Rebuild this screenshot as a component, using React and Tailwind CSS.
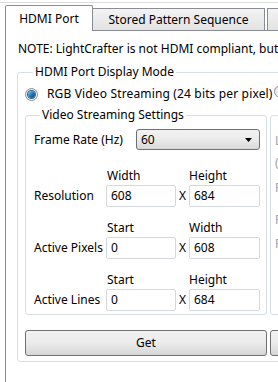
import React from 'react';

const font = { fontFamily: '"Noto Sans", "Open Sans", sans-serif' };

const Radio = ({ checked }) => (
  <span className="relative inline-flex h-[13px] w-[13px] shrink-0 items-center justify-center rounded-full border border-[#8e8f8f] bg-gradient-to-br from-[#e6e6e6] to-[#ffffff]">
    {checked && (
      <span className="h-[7px] w-[7px] rounded-full bg-gradient-to-br from-[#7ad0f5] via-[#1d7ac0] to-[#0f3c6e] shadow-[0_0_0_1px_#2a5f8f]" />
    )}
  </span>
);

const Field = ({ value, w }) => (
  <div className={`${w} h-[22px] flex items-center border border-[#d5d9de] rounded-[2px] bg-white pl-[4px] text-[12px] text-black`}>
    {value}
  </div>
);

const Row = ({ label, h1, h2, v1, v2 }) => (
  <div className="mt-[12px] first:mt-0">
    <div className="flex h-[18px] items-center text-[12px] leading-none">
      <span className="w-[72px]" />
      <span className="w-[83px] pl-[1px]">{h1}</span>
      <span>{h2}</span>
    </div>
    <div className="flex h-[22px] items-center text-[12px]">
      <span className="w-[72px] whitespace-nowrap">{label}</span>
      <Field value={v1} w="w-[70px]" />
      <span className="w-[13px] text-center">X</span>
      <Field value={v2} w="w-[71px]" />
    </div>
  </div>
);

export default function App() {
  return (
    <div className="w-[278px] h-[382px] overflow-hidden bg-white text-black relative" style={font}>
      <div className="h-[3px] border-b border-[#dcdcdc] w-[420px]" />

      {/* tabs */}
      <div className="flex w-[500px] items-end pl-[5px] mt-[2px] whitespace-nowrap">
        <div className="relative z-10 -mb-px flex h-[26px] w-[88px] shrink-0 items-center justify-center border border-b-0 border-[#898c95] rounded-t-[2px] bg-white text-[12px]">
          HDMI Port
        </div>
        <div className="flex h-[22px] w-[172px] shrink-0 items-center justify-center border border-l-0 border-b-0 border-[#898c95] bg-gradient-to-b from-[#f3f3f3] to-[#e3e3e3] text-[12px]">
          Stored Pattern Sequence
        </div>
        <div className="ml-[2px] h-[22px] w-[80px] shrink-0 border border-b-0 border-[#898c95] bg-gradient-to-b from-[#f3f3f3] to-[#e3e3e3]" />
      </div>

      {/* pane */}
      <div className="ml-[5px] h-[360px] w-[500px] border-l border-t border-[#898c95] bg-white pl-[11px] pt-[10px]">
        <div className="h-[16px] leading-[16px] whitespace-nowrap text-[12px] pl-[1px]">
          NOTE: LightCrafter is not HDMI compliant, but supports
        </div>

        <fieldset className="mt-[7px] w-[440px] h-[298px] border border-[#d5dfe5] rounded-[3px] pl-[7px]">
          <legend className="ml-[8px] px-[2px] text-[12px] leading-[16px]">HDMI Port Display Mode</legend>

          <div className="mt-[6px] flex h-[16px] items-center text-[12px] whitespace-nowrap">
            <Radio checked />
            <span className="ml-[9px] tracking-[0.15px]">RGB Video Streaming (24 bits per pixel)</span>
            <span className="ml-[1px]"><Radio /></span>
          </div>

          <div className="mt-[5px] flex gap-[3px]">
            <fieldset className="w-[242px] h-[208px] shrink-0 border border-[#d5dfe5] rounded-[3px] pl-[8px]">
              <legend className="ml-[6px] px-[2px] text-[12px] leading-[16px]">Video Streaming Settings</legend>

              <div className="mt-[6px] flex h-[21px] items-center text-[12px]">
                <span className="w-[102px]">Frame Rate (Hz)</span>
                <div className="relative flex h-[21px] w-[124px] items-center rounded-[3px] border border-[#707070] bg-gradient-to-b from-[#f2f2f2] via-[#ebebeb] to-[#d8d8d8] pl-[4px]">
                  60
                  <svg className="absolute right-[7px] top-[8px]" width="7" height="4" viewBox="0 0 7 4">
                    <path d="M0 0H7L3.5 4Z" fill="#000" />
                  </svg>
                </div>
              </div>

              <div className="mt-[17px]">
                <Row label="Resolution" h1="Width" h2="Height" v1="608" v2="684" />
                <Row label="Active Pixels" h1="Start" h2="Width" v1="0" v2="608" />
                <Row label="Active Lines" h1="Start" h2="Height" v1="0" v2="684" />
              </div>
            </fieldset>

            <fieldset className="w-[160px] h-[208px] shrink-0 border border-[#d5dfe5] rounded-[3px] pl-[4px] text-[12px] text-[#a0a0a0]">
              <legend className="ml-[80px] px-[2px] leading-[16px]">&nbsp;</legend>
              <div className="mt-[10px] leading-[16px]">Line</div>
              <div className="mt-[6px] leading-[16px]">(</div>
              <div className="mt-[9px] leading-[16px]">F</div>
              <div className="mt-[16px] leading-[16px]">F</div>
              <div className="mt-[8px] leading-[16px]">F</div>
            </fieldset>
          </div>

          <div className="mt-[15px] flex gap-[3px]">
            <button className="h-[26px] w-[242px] shrink-0 rounded-[3px] border border-[#707070] bg-gradient-to-b from-[#f2f2f2] via-[#ebebeb] to-[#d6d6d6] text-[12px]">
              Get
            </button>
            <button className="h-[26px] w-[160px] shrink-0 rounded-[3px] border border-[#707070] bg-gradient-to-b from-[#f2f2f2] via-[#ebebeb] to-[#d6d6d6] text-[12px]">
              Set
            </button>
          </div>
        </fieldset>
      </div>
    </div>
  );
}
